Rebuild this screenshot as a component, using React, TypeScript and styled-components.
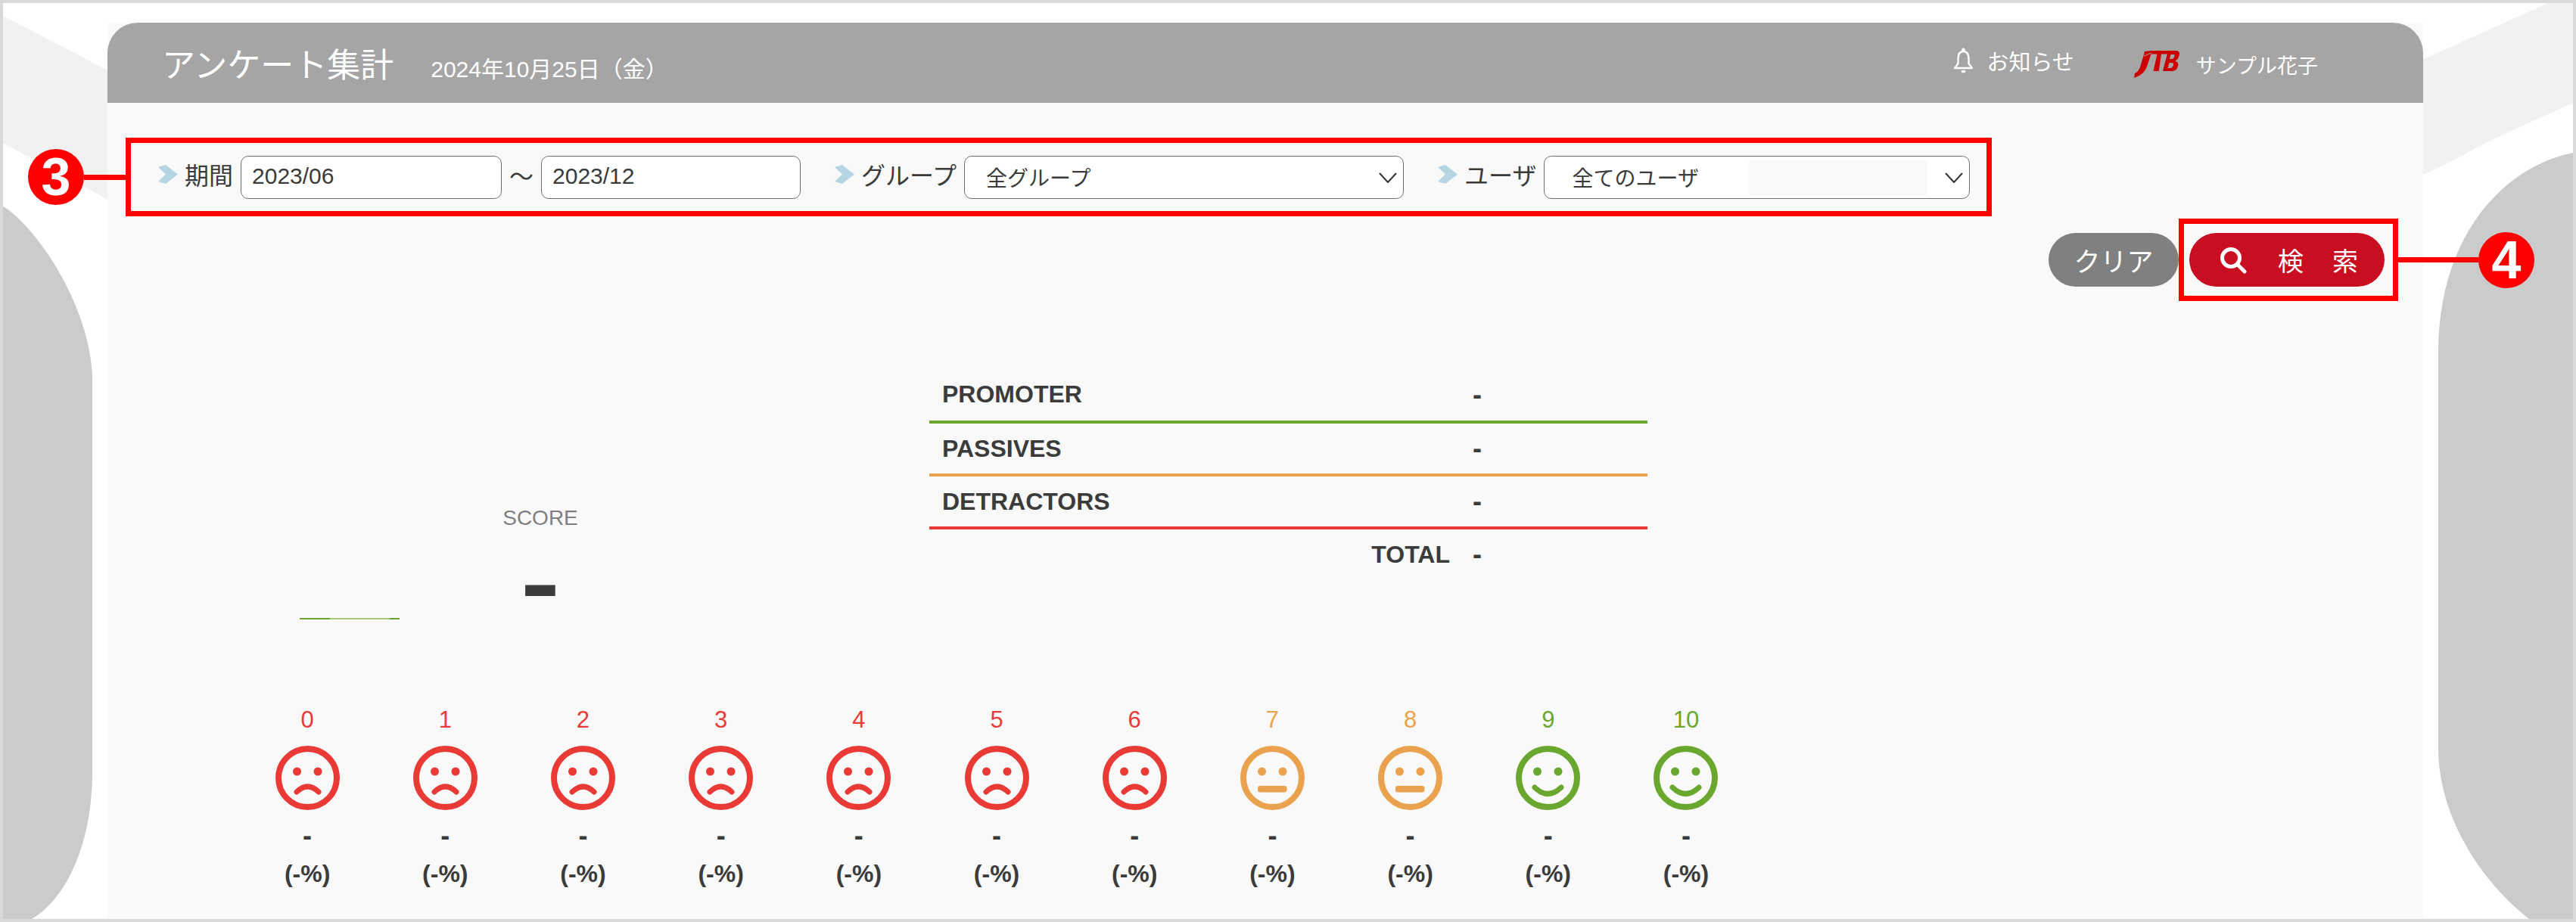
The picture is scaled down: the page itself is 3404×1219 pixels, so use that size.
import React from 'react'
import styled, { createGlobalStyle } from 'styled-components'

const INK = '#3b3b3b'
const RED = '#e93a36'
const ORANGE = '#eaa24f'
const GREEN = '#6aa72e'
const MARK = '#ff0000'

const GlobalStyle = createGlobalStyle`
  html, body {
    margin: 0;
    padding: 0;
    background: #fff;
  }
  body {
    font-family: "Liberation Sans", "Noto Sans CJK JP", sans-serif;
    color: ${INK};
  }
  * {
    box-sizing: border-box;
  }
`

const Page = styled.div`
  position: relative;
  display: flex;
  flex-direction: column;
  width: 3404px;
  height: 1219px;
  padding: 26px 198px 0 138px;
  border: 4px solid #d9d9d9;
  overflow: hidden;
  background: #fff;
`

const Backdrop = styled.svg`
  position: absolute;
  inset: 0;
  width: 100%;
  height: 100%;
`

const Panel = styled.main`
  position: relative;
  flex: 1;
  background: #f9f9f9;
`

const Header = styled.header`
  display: flex;
  align-items: center;
  height: 106px;
  padding: 0 139px 0 72px;
  border-radius: 40px 40px 0 0;
  background: #a5a5a5;
  color: #fff;
`

const Title = styled.h1`
  margin: 0;
  font-size: 44px;
  font-weight: 400;
`

const Today = styled.span`
  margin: 12px 0 0 49px;
  font-size: 30px;
`

const HeaderNotice = styled.div`
  display: flex;
  align-items: center;
  gap: 17px;
  margin: 0 0 6px auto;
  font-size: 29px;
`

const HeaderUser = styled.div`
  display: flex;
  align-items: center;
  gap: 22px;
  margin: 4px 0 0 78px;
  font-size: 27px;
`

const FilterFrame = styled.section`
  position: relative;
  display: flex;
  align-items: center;
  gap: 45px;
  width: 2466px;
  height: 104px;
  margin: 46px 0 0 24px;
  padding-left: 36px;
  border: 7px solid ${MARK};
`

const FilterGroup = styled.div`
  display: flex;
  align-items: center;
`

const Arrow = styled.svg`
  flex: none;
  width: 26px;
  height: 25px;
  margin: 0 9px 8px 0;
`

const FilterLabel = styled.label`
  margin: 0 10px 8px 0;
  font-size: 32px;
  white-space: nowrap;
`

const DateInput = styled.input<{ $width: number }>`
  width: ${(p) => p.$width}px;
  height: 57px;
  padding: 0 0 2px 14px;
  border: 1px solid #707070;
  border-radius: 10px;
  background: #fff;
  color: ${INK};
  font: 30px "Liberation Sans", sans-serif;
  outline: none;
`

const Tilde = styled.span`
  width: 52px;
  margin-bottom: 6px;
  font-size: 32px;
  text-align: center;
`

const SelectWrap = styled.div<{ $width: number }>`
  position: relative;
  flex: none;
  width: ${(p) => p.$width}px;
  height: 57px;
`

const Select = styled.select<{ $inset: number }>`
  width: 100%;
  height: 100%;
  padding: 0 0 0 ${(p) => p.$inset}px;
  border: 1px solid #707070;
  border-radius: 10px;
  background: #fff;
  color: ${INK};
  font: 28px "Noto Sans CJK JP", sans-serif;
  appearance: none;
  outline: none;
`

const SelectArrow = styled.svg`
  position: absolute;
  top: 22px;
  right: 8px;
  width: 26px;
  height: 14px;
  pointer-events: none;
`

const SelectPatch = styled.div`
  position: absolute;
  top: 6px;
  right: 56px;
  width: 236px;
  height: 46px;
  background: #f9f9f9;
  pointer-events: none;
`

const Callout = styled.div<{ $side: 'left' | 'right' }>`
  position: absolute;
  top: 50%;
  display: flex;
  align-items: center;
  transform: translateY(-50%);
  ${(p) => (p.$side === 'left' ? 'right: calc(100% + 7px);' : 'left: calc(100% + 7px);')}
`

const CalloutLine = styled.div<{ $width: number }>`
  width: ${(p) => p.$width}px;
  height: 7px;
  background: ${MARK};
`

const Badge = styled.div`
  display: flex;
  align-items: center;
  justify-content: center;
  width: 74px;
  height: 74px;
  border-radius: 50%;
  background: ${MARK};
  color: #fff;
  font-size: 70px;
  font-weight: 700;
  line-height: 1;
`

const ActionRow = styled.div`
  display: flex;
  align-items: center;
  justify-content: flex-end;
  margin-top: 3px;
  padding-right: 33px;
`

const SearchFrame = styled.div`
  position: relative;
  width: 290px;
  height: 109px;
  padding: 12px 0 0 7px;
  border: 7px solid ${MARK};
`

const PillButton = styled.button<{ $tone: string; $width: number }>`
  display: flex;
  align-items: center;
  justify-content: center;
  width: ${(p) => p.$width}px;
  height: 71px;
  padding: 0;
  border: 0;
  border-radius: 36px;
  background: ${(p) => p.$tone};
  color: #fff;
  font: 35px "Liberation Sans", "Noto Sans CJK JP", sans-serif;
`

const SearchButton = styled(PillButton)`
  justify-content: flex-start;
  padding-left: 40px;
  font-size: 34px;
  letter-spacing: 38px;
  white-space: nowrap;
`

const SearchIcon = styled.svg`
  flex: none;
  width: 37px;
  height: 36px;
  margin-right: 40px;
`

const Summary = styled.section`
  display: flex;
  align-items: flex-start;
  margin-top: 92px;
  padding-left: 254px;
`

const GaugeLine = styled.div`
  flex: none;
  width: 132px;
  height: 2px;
  margin-top: 327px;
  background: linear-gradient(90deg, ${GREEN} 0 30%, #a9c579 30% 90%, ${GREEN} 90% 100%);
`

const Score = styled.div`
  flex: none;
  display: flex;
  flex-direction: column;
  align-items: center;
  width: 200px;
  margin: 178px 0 0 86px;
`

const ScoreLabel = styled.div`
  color: #808080;
  font-size: 28px;
  line-height: 34px;
`

const ScoreValue = styled.div`
  height: 90px;
  margin-top: 23px;
  font-size: 120px;
  font-weight: 700;
  line-height: 90px;
  transform: scaleX(1.3);
`

const Breakdown = styled.div`
  flex: none;
  width: 949px;
  margin-left: 414px;
`

const BreakdownRow = styled.div<{ $rule?: string }>`
  display: grid;
  grid-template-columns: 701px 1fr;
  align-items: center;
  height: 70px;
  padding-left: 17px;
  border-bottom: 4px solid ${(p) => p.$rule ?? 'transparent'};
  font-size: 32px;
  font-weight: 700;

  &:first-child {
    padding-bottom: 3px;
  }
`

const RowTotal = styled.span`
  justify-self: end;
  margin-right: 30px;
`

const RowValue = styled.span`
  font-size: 36px;
`

const Ratings = styled.section`
  display: flex;
  margin-top: 115px;
  padding-left: 173px;
`

const Rating = styled.div`
  display: flex;
  flex-direction: column;
  align-items: center;
  width: 182.2px;
`

const RatingNumber = styled.div<{ $tone: string }>`
  color: ${(p) => p.$tone};
  font-size: 31px;
  line-height: 36px;
`

const Face = styled.svg`
  width: 85px;
  height: 85px;
  margin-top: 16px;
`

const RatingCount = styled.div`
  margin-top: 13px;
  font-size: 36px;
  font-weight: 700;
  line-height: 42px;
`

const RatingShare = styled.div`
  margin-top: 10px;
  font-size: 32px;
  font-weight: 700;
  line-height: 38px;
`

const BlueArrow = () => (
  <Arrow viewBox="0 0 26 25">
    <polygon points="0,3 10,0 26,12.5 10,25 0,22 10,12.5" fill="#b5d5e2" />
  </Arrow>
)

const DownArrow = () => (
  <SelectArrow viewBox="0 0 26 14">
    <path d="M2 1 L13 13 L24 1" fill="none" stroke="#333" strokeWidth="2" />
  </SelectArrow>
)

const BellIcon = () => (
  <svg width="27" height="34" viewBox="0 0 27 34">
    <circle cx="13.5" cy="3" r="2.4" fill="#fff" />
    <path
      d="M13.5 5 C8 5 6.5 10 6.5 15 V21 L2 27 H25 L20.5 21 V15 C20.5 10 19 5 13.5 5 Z"
      fill="none"
      stroke="#fff"
      strokeWidth="2.4"
      strokeLinejoin="round"
    />
    <ellipse cx="13.5" cy="31.5" rx="3" ry="1.8" fill="#fff" />
  </svg>
)

const JtbLogo = () => (
  <svg width="61" height="36" viewBox="0 0 61 36">
    <path d="M15 1 L25 0 L19 18 C17 25 13 32 1 36 L2 30 C7 28 9 23 11 15 L14 5 Z" fill="#cc0000" />
    <path d="M24 0 H47 L45 4.5 H37 L33.7 27 H26.5 L31.5 4.5 H23 Z" fill="#cc0000" />
    <path
      d="M46 0 H56 C61 0 62 3 60 8 C59 11 57 13 55 13.5 C58 14.5 60 16 59 20 C58 25 55 27 50 27 H39 Z M49.5 5 L48 11 H51 C53 11 54 9 54.5 7 C55 5.5 54 5 52.5 5 Z M47.5 16 L45.5 23 H49 C51 23 52.5 21 53 19 C53.5 17 52.5 16 51 16 Z"
      fill="#cc0000"
      fillRule="evenodd"
    />
    <path d="M14 7 L24 3" stroke="#a5a5a5" strokeWidth="1" />
  </svg>
)

type Mood = 'sad' | 'flat' | 'happy'

const MoodFace = ({ mood, tone }: { mood: Mood; tone: string }) => (
  <Face viewBox="0 0 85 85">
    <circle cx="42.5" cy="42.5" r="38.5" fill="none" stroke={tone} strokeWidth="8" />
    <circle cx="28.5" cy="34" r="5.5" fill={tone} />
    <circle cx="56" cy="34" r="5.5" fill={tone} />
    {mood === 'sad' && (
      <path d="M28 61 Q42.5 47 57 61" fill="none" stroke={tone} strokeWidth="7" strokeLinecap="round" />
    )}
    {mood === 'flat' && <rect x="23" y="53" width="38.5" height="8.5" rx="3" fill={tone} />}
    {mood === 'happy' && (
      <path d="M25 55 Q42.5 72 60 55" fill="none" stroke={tone} strokeWidth="7" strokeLinecap="round" />
    )}
  </Face>
)

const ratings = Array.from({ length: 11 }, (_, score) => {
  if (score <= 6) return { score, mood: 'sad' as Mood, tone: RED }
  if (score <= 8) return { score, mood: 'flat' as Mood, tone: ORANGE }
  return { score, mood: 'happy' as Mood, tone: GREEN }
})

const App = () => (
  <Page>
    <GlobalStyle />
    <Backdrop viewBox="4 4 3396 1211" preserveAspectRatio="none">
      <polygon points="0,19 150,97 150,268 0,187" fill="#f1f1f1" />
      <path d="M3190 84 L3367 4 H3400 V136 L3290 186 C3255 205 3225 222 3190 236 Z" fill="#f1f1f1" />
      <path d="M0 270 C45 295 118 400 122 498 V1019 C122 1120 85 1190 42 1215 H0 Z" fill="#cbcbcb" />
      <path d="M3400 202 C3310 220 3222 310 3222 466 V988 C3222 1090 3290 1175 3342 1215 H3400 Z" fill="#cbcbcb" />
    </Backdrop>

    <Panel>
      <Header>
        <Title>アンケート集計</Title>
        <Today>2024年10月25日（金）</Today>
        <HeaderNotice>
          <BellIcon />
          お知らせ
        </HeaderNotice>
        <HeaderUser>
          <JtbLogo />
          サンプル花子
        </HeaderUser>
      </Header>

      <FilterFrame>
        <FilterGroup>
          <BlueArrow />
          <FilterLabel>期間</FilterLabel>
          <DateInput $width={345} defaultValue="2023/06" />
          <Tilde>〜</Tilde>
          <DateInput $width={343} defaultValue="2023/12" />
        </FilterGroup>
        <FilterGroup>
          <BlueArrow />
          <FilterLabel>グループ</FilterLabel>
          <SelectWrap $width={581}>
            <Select $inset={28} defaultValue="all">
              <option value="all">全グループ</option>
            </Select>
            <DownArrow />
          </SelectWrap>
        </FilterGroup>
        <FilterGroup>
          <BlueArrow />
          <FilterLabel>ユーザ</FilterLabel>
          <SelectWrap $width={563}>
            <Select $inset={36} defaultValue="all">
              <option value="all">全てのユーザ</option>
            </Select>
            <SelectPatch />
            <DownArrow />
          </SelectWrap>
        </FilterGroup>
        <Callout $side="left">
          <Badge>3</Badge>
          <CalloutLine $width={55} />
        </Callout>
      </FilterFrame>

      <ActionRow>
        <PillButton $tone="#808080" $width={172}>
          クリア
        </PillButton>
        <SearchFrame>
          <SearchButton $tone="#c90e21" $width={258}>
            <SearchIcon viewBox="0 0 37 36">
              <circle cx="15" cy="15" r="11.5" fill="none" stroke="#fff" strokeWidth="5" />
              <path d="M24 24 L33 33" stroke="#fff" strokeWidth="5" strokeLinecap="round" />
            </SearchIcon>
            検索
          </SearchButton>
          <Callout $side="right">
            <CalloutLine $width={106} />
            <Badge>4</Badge>
          </Callout>
        </SearchFrame>
      </ActionRow>

      <Summary>
        <GaugeLine />
        <Score>
          <ScoreLabel>SCORE</ScoreLabel>
          <ScoreValue>-</ScoreValue>
        </Score>
        <Breakdown>
          <BreakdownRow $rule={GREEN}>
            <span>PROMOTER</span>
            <RowValue>-</RowValue>
          </BreakdownRow>
          <BreakdownRow $rule={ORANGE}>
            <span>PASSIVES</span>
            <RowValue>-</RowValue>
          </BreakdownRow>
          <BreakdownRow $rule={RED}>
            <span>DETRACTORS</span>
            <RowValue>-</RowValue>
          </BreakdownRow>
          <BreakdownRow>
            <RowTotal>TOTAL</RowTotal>
            <RowValue>-</RowValue>
          </BreakdownRow>
        </Breakdown>
      </Summary>

      <Ratings>
        {ratings.map((r) => (
          <Rating key={r.score}>
            <RatingNumber $tone={r.tone}>{r.score}</RatingNumber>
            <MoodFace mood={r.mood} tone={r.tone} />
            <RatingCount>-</RatingCount>
            <RatingShare>(-%)</RatingShare>
          </Rating>
        ))}
      </Ratings>
    </Panel>
  </Page>
)

export default App
